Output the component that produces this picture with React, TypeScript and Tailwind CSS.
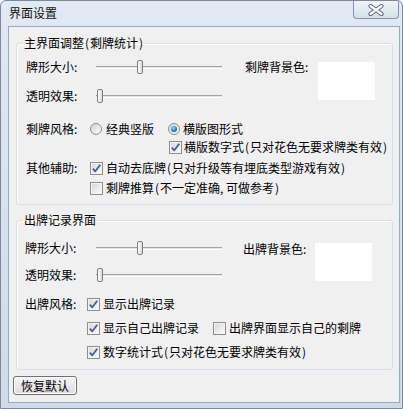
import React from "react";

function T({ s }: { s: string }) {
  const parts = s.split(/([()])/);
  return (
    <span>
      {parts.map((p, i) =>
        p === "(" || p === ")" ? (
          <span key={i} className="inline-block w-[6px] text-center">{p}</span>
        ) : (
          <React.Fragment key={i}>{p}</React.Fragment>
        )
      )}
    </span>
  );
}

function Slider({ thumb }: { thumb: number }) {
  return (
    <div className="relative w-[126px] h-[20px] flex items-center">
      <div className="w-full h-[3px] border-t border-[#a3a3a3] bg-[#e4e4e4] border-b border-b-white" />
      <div
        className="absolute top-[3px] w-[6px] h-[14px] rounded-[2px] border border-[#7d7d7d] bg-gradient-to-r from-[#ffffff] to-[#dcdcdc]"
        style={{ left: thumb }}
      />
    </div>
  );
}

function Radio({ checked }: { checked?: boolean }) {
  return (
    <div className="w-[12px] h-[12px] rounded-full border border-[#8e8f8f] bg-gradient-to-br from-[#d4d4d4] to-[#fbfbfb] flex items-center justify-center shrink-0">
      {checked && (
        <div className="w-[6px] h-[6px] rounded-full bg-[radial-gradient(circle_at_40%_35%,#9be0ff,#2a79c4_55%,#0e3f77)]" />
      )}
    </div>
  );
}

function Check({ checked }: { checked?: boolean }) {
  return (
    <div className="w-[13px] h-[13px] border border-[#8e8f8f] bg-gradient-to-br from-[#d6d6d6] to-[#fdfdfd] shadow-[inset_0_0_0_1px_#f3f3f3] flex items-center justify-center shrink-0">
      {checked && (
        <svg width="11" height="11" viewBox="0 0 11 11">
          <path d="M1.8 5.6 L4.3 8.3 L9.3 1.8" fill="none" stroke="#4a5d88" strokeWidth="1.8" strokeLinejoin="round" />
        </svg>
      )}
    </div>
  );
}

export default function App() {
  return (
    <div className="w-[403px] h-[409px] overflow-hidden border border-[#7a8a9c] rounded-t-[6px] bg-gradient-to-b from-[#e1e9f2] to-[#cfdbe8] text-[12px] leading-[14px] text-black font-['Noto_Sans_CJK_SC','Noto_Sans',sans-serif]">
      <div className="h-[25px] flex justify-between items-start">
        <div className="pl-[8px] pt-[5px] text-[#111]">界面设置</div>
        <div className="mr-[3px] w-[46px] h-[18px] border border-t-0 border-[#8594a8] rounded-b-[4px] bg-gradient-to-b from-[#f1f4f8] to-[#d6dfe9] flex items-center justify-center">
          <svg width="16" height="12" viewBox="0 0 16 12">
            <path d="M2.5 2 L13.5 10 M13.5 2 L2.5 10" stroke="#5e6c80" strokeWidth="4.2" strokeLinecap="round" />
            <path d="M2.5 2 L13.5 10 M13.5 2 L2.5 10" stroke="#ffffff" strokeWidth="2.2" strokeLinecap="round" />
          </svg>
        </div>
      </div>
      <div className="ml-[7px] w-[392px] h-[377px] border border-[#9aaabd] bg-[#f0f0f0] flex flex-col">
        <fieldset className="mt-[9px] ml-[7px] w-[377px] border border-[#d5dfe5] rounded-[3px] shadow-[inset_1px_1px_0_#ffffff]">
          <legend className="ml-[6px] px-[1px] leading-[14px]"><T s="主界面调整(剩牌统计)" /></legend>
          <div className="pl-[9px] pt-[7px] pb-[6px] flex flex-col">
            <div className="flex">
              <div className="flex flex-col">
                <div className="h-[20px] flex items-center">
                  <div className="w-[70px]">牌形大小:</div>
                  <Slider thumb={41} />
                </div>
                <div className="mt-[9px] h-[20px] flex items-center">
                  <div className="w-[70px]">透明效果:</div>
                  <Slider thumb={1} />
                </div>
              </div>
              <div className="ml-[23px] flex items-start">
                <div className="mt-[3px] w-[73px]">剩牌背景色:</div>
                <div className="mt-[5px] w-[57px] h-[38px] bg-white" />
              </div>
            </div>
            <div className="mt-[13px] h-[20px] flex items-center">
              <div className="w-[64px]">剩牌风格:</div>
              <Radio />
              <div className="ml-[4px]">经典竖版</div>
              <div className="ml-[14px]"><Radio checked /></div>
              <div className="ml-[3px]">横版图形式</div>
            </div>
            <div className="h-[16px] pl-[143px] flex items-center">
              <Check checked />
              <div className="ml-[2px]"><T s="横版数字式(只对花色无要求牌类有效)" /></div>
            </div>
            <div className="mt-[3px] h-[20px] flex items-center">
              <div className="w-[64px]">其他辅助:</div>
              <Check checked />
              <div className="ml-[3px]"><T s="自动去底牌(只对升级等有埋底类型游戏有效)" /></div>
            </div>
            <div className="h-[20px] pl-[64px] flex items-center">
              <Check />
              <div className="ml-[3px]"><T s="剩牌推算(不一定准确, 可做参考)" /></div>
            </div>
          </div>
        </fieldset>
        <fieldset className="mt-[8px] ml-[7px] w-[377px] border border-[#d5dfe5] rounded-[3px] shadow-[inset_1px_1px_0_#ffffff]">
          <legend className="ml-[6px] px-[1px] leading-[14px]">出牌记录界面</legend>
          <div className="pl-[8px] pt-[11px] pb-[7px] flex flex-col">
            <div className="flex">
              <div className="flex flex-col">
                <div className="h-[20px] flex items-center">
                  <div className="w-[71px]">牌形大小:</div>
                  <Slider thumb={41} />
                </div>
                <div className="mt-[7px] h-[20px] flex items-center">
                  <div className="w-[71px]">透明效果:</div>
                  <Slider thumb={1} />
                </div>
              </div>
              <div className="ml-[21px] flex items-start">
                <div className="mt-[4px] w-[72px]">出牌背景色:</div>
                <div className="mt-[5px] w-[57px] h-[38px] bg-white" />
              </div>
            </div>
            <div className="mt-[9px] h-[20px] flex items-center">
              <div className="w-[62px]">出牌风格:</div>
              <Check checked />
              <div className="ml-[3px]">显示出牌记录</div>
            </div>
            <div className="mt-[4px] h-[20px] pl-[62px] flex items-center">
              <Check checked />
              <div className="ml-[3px]">显示自己出牌记录</div>
              <div className="ml-[14px]"><Check /></div>
              <div className="ml-[3px]">出牌界面显示自己的剩牌</div>
            </div>
            <div className="mt-[4px] h-[20px] pl-[62px] flex items-center">
              <Check checked />
              <div className="ml-[3px]"><T s="数字统计式(只对花色无要求牌类有效)" /></div>
            </div>
          </div>
        </fieldset>
        <div className="mt-[6px] ml-[4px] w-[64px] h-[19px] border border-[#707070] rounded-[3px] bg-gradient-to-b from-[#f4f4f4] to-[#dcdcdc] flex items-center justify-center shadow-[inset_0_0_0_1px_#fcfcfc]">
          恢复默认
        </div>
      </div>
    </div>
  );
}
